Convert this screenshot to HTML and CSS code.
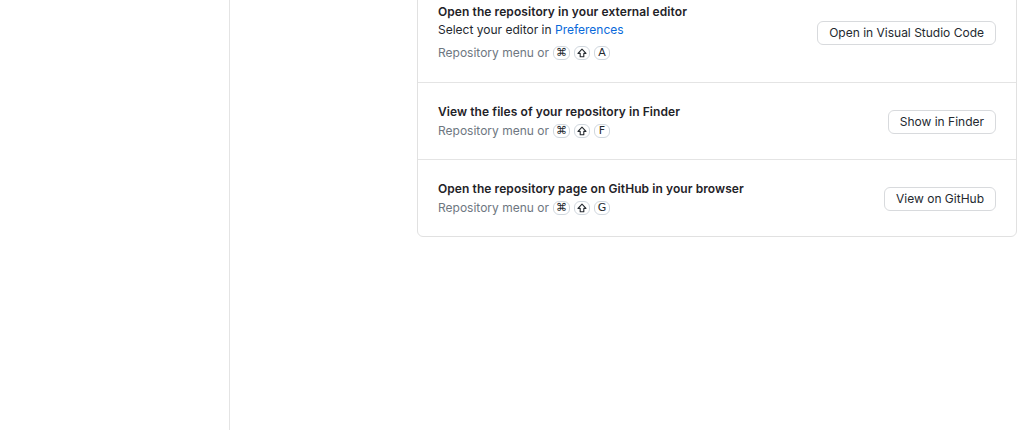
FILE: index.html
```html
<!DOCTYPE html>
<html>
<head>
<meta charset="utf-8">
<title>Integrations</title>
<link rel="stylesheet" href="styles.css">
</head>
<body>
<!-- sidebar is empty in this view -->
<div class="sidebar"></div>
<div class="main">
  <div class="card">
    <div class="row">
      <div class="info">
        <div class="title">Open the repository in your external editor</div>
        <div class="sub">Select your editor in <a href="#">Preferences</a></div>
        <div class="hint hint-gap">Repository menu or <span class="key">&#8984;</span><span class="key"><svg class="shift" viewBox="0 0 10 10"><path d="M5 1.2 L9 5.4 H6.8 V8.8 H3.2 V5.4 H1 Z"/></svg></span><span class="key">A</span></div>
      </div>
      <button class="btn">Open in Visual Studio Code</button>
    </div>
    <div class="row">
      <div class="info">
        <div class="title">View the files of your repository in Finder</div>
        <div class="hint">Repository menu or <span class="key">&#8984;</span><span class="key"><svg class="shift" viewBox="0 0 10 10"><path d="M5 1.2 L9 5.4 H6.8 V8.8 H3.2 V5.4 H1 Z"/></svg></span><span class="key">F</span></div>
      </div>
      <button class="btn">Show in Finder</button>
    </div>
    <div class="row">
      <div class="info">
        <div class="title">Open the repository page on GitHub in your browser</div>
        <div class="hint">Repository menu or <span class="key">&#8984;</span><span class="key"><svg class="shift" viewBox="0 0 10 10"><path d="M5 1.2 L9 5.4 H6.8 V8.8 H3.2 V5.4 H1 Z"/></svg></span><span class="key">G</span></div>
      </div>
      <button class="btn">View on GitHub</button>
    </div>
  </div>
</div>
</body>
</html>
```

FILE: styles.css
```css
html, body {
	margin: 0;
	height: 100%;
	overflow: hidden;
	background: #fff;
}
body {
	display: flex;
	font-family: Inter, "Liberation Sans", sans-serif;
	font-size: 12px;
	color: #24292f;
}
.sidebar {
	width: 229px;
	flex: none;
	border-right: 1px solid #e4e4e4;
}
.main {
	flex: 1;
	padding-left: 187px;
}
.card {
	width: 598px;
	margin-top: -18px;
	border: 1px solid #e1e1e1;
	border-radius: 6px;
}
.row {
	display: flex;
	align-items: center;
	justify-content: space-between;
	padding: 20px 20px 19px;
	border-top: 1px solid #e4e4e4;
}
.row:first-child {
	border-top: none;
	padding-bottom: 20px;
}
.title {
	font-weight: 600;
	line-height: 18px;
	letter-spacing: 0.08px;
	color: #1f2328;
}
.sub {
	line-height: 18px;
}
.sub a {
	color: #0969da;
	text-decoration: none;
}
.hint {
	line-height: 19px;
	color: #6e7781;
	display: flex;
	align-items: center;
}
.hint-gap { margin-top: 4px; }
.key {
	display: inline-flex;
	align-items: center;
	justify-content: center;
	min-width: 10px;
	height: 12px;
	padding: 0 2px;
	margin-left: 4px;
	border: 1px solid #d0d7de;
	border-radius: 6px;
	font-size: 11px;
	color: #24292f;
	font-family: "DejaVu Sans", Inter, sans-serif;
}
.key + .key { margin-left: 4px; }
.shift {
	width: 10px;
	height: 10px;
	fill: none;
	stroke: #24292f;
	stroke-width: 1.1;
	stroke-linejoin: round;
}
.btn {
	font-family: inherit;
	font-size: 12px;
	line-height: 14px;
	padding: 4px 11px;
	color: #24292f;
	background: #fff;
	border: 1px solid #d8dadd;
	border-radius: 6px;
}
```
